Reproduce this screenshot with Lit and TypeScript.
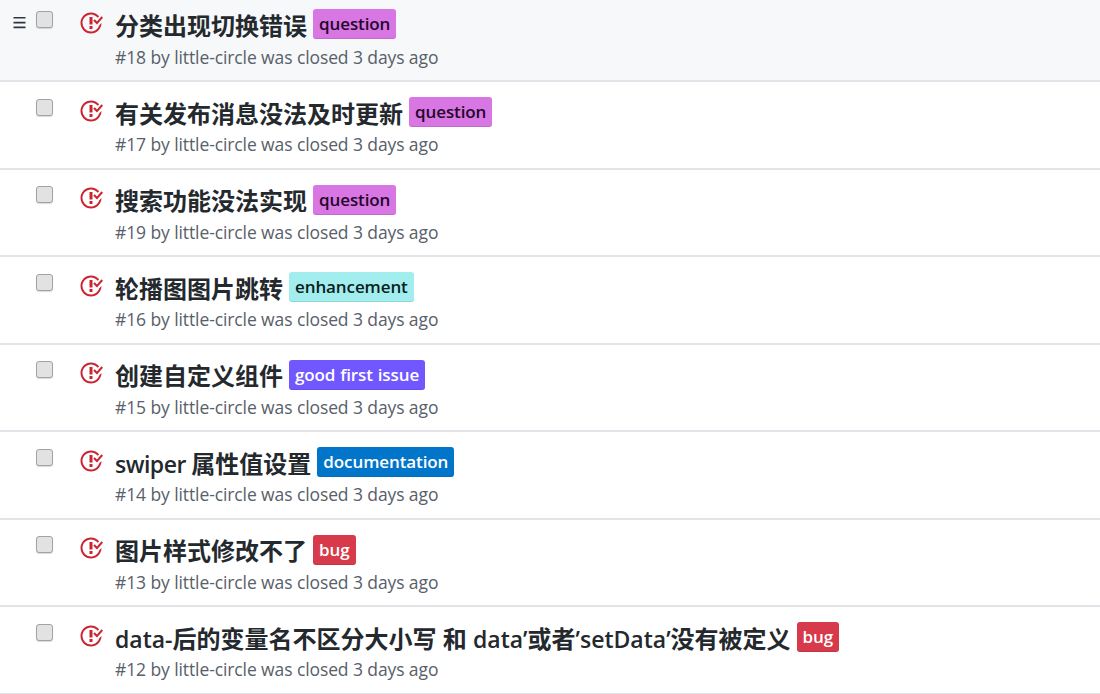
import { LitElement, html, css } from "lit";
import { customElement } from "lit/decorators.js";

type Issue = { title: unknown; num: number; label: string; cls: string };

const issues: Issue[] = [
  { title: html`<b>分类出现切换错误</b>`, num: 18, label: "question", cls: "question" },
  { title: html`<b>有关发布消息没法及时更新</b>`, num: 17, label: "question", cls: "question" },
  { title: html`<b>搜索功能没法实现</b>`, num: 19, label: "question", cls: "question" },
  { title: html`<b>轮播图图片跳转</b>`, num: 16, label: "enhancement", cls: "enhancement" },
  { title: html`<b>创建自定义组件</b>`, num: 15, label: "good first issue", cls: "good" },
  { title: html`<span class="tight">swiper </span><b>属性值设置</b>`, num: 14, label: "documentation", cls: "doc" },
  { title: html`<b>图片样式修改不了</b>`, num: 13, label: "bug", cls: "bug" },
  { title: html`data-<b>后的变量名不区分大小写 和 </b>data’<b>或者</b>’setData’<b>没有被定义</b>`, num: 12, label: "bug", cls: "bug" },
];

@customElement("app-root")
export class AppRoot extends LitElement {
  static styles = css`
    :host {
      display: block;
      width: 1100px;
      height: 694px;
      overflow: hidden;
      background: #fff;
      font-family: "Open Sans", "Noto Sans CJK SC", sans-serif;
      color: #24292e;
    }
    .row {
      display: grid;
      grid-template-columns: 36px 44px 35px 1fr;
      height: 87.5px;
      box-sizing: border-box;
      border-bottom: 2px solid #e1e4e8;
    }
    .row.first {
      height: 82px;
      background: #f6f8fa;
    }
    .cell {
      padding-top: 6px;
    }
    .row.first .cell {
      padding-top: 0;
    }
    .row.first .box,
    .row.first .state svg {
      margin-top: 11px;
    }
    .row.first .meta {
      margin-top: 6px;
    }
    .grip {
      display: flex;
      justify-content: flex-end;
      padding-right: 10px;
    }
    .grip svg {
      display: block;
      margin-top: 16px;
      width: 13px;
      height: 13px;
      fill: #2f363d;
    }
    .box {
      display: block;
      box-sizing: border-box;
      width: 17px;
      height: 17px;
      margin-top: 10.5px;
      border: 1px solid #a3a3a3;
      border-radius: 3px;
      background: #e2e2e2;
      box-shadow: 0 1px 1px rgba(0, 0, 0, 0.15);
    }
    .state svg {
      display: block;
      margin-top: 10.5px;
      margin-left: -1px;
      width: 24px;
      height: 24px;
      fill: #cb2431;
    }
    .title {
      display: flex;
      align-items: center;
      gap: 6px;
      margin-top: 9px;
      height: 30px;
      font-size: 23px;
      line-height: 30px;
      font-weight: 600;
      white-space: nowrap;
    }
    .text {
      padding-top: 3px;
    }
    .tight {
      letter-spacing: -0.5px;
    }
    .title b {
      font-size: 24px;
      font-weight: 700;
    }
    .label {
      box-sizing: border-box;
      height: 30px;
      padding: 0 6px;
      border-radius: 3px;
      font-size: 17px;
      letter-spacing: -0.1px;
      word-spacing: 0.5px;
      line-height: 29px;
      font-weight: 600;
      box-shadow: inset 0 -1px 0 rgba(27, 31, 35, 0.12);
    }
    .question {
      background: #d876e3;
      color: #23062a;
    }
    .enhancement {
      background: #a2eeef;
      color: #0a2020;
    }
    .good {
      background: #7057ff;
      color: #fff;
    }
    .doc {
      background: #0075ca;
      color: #fff;
    }
    .bug {
      background: #d73a4a;
      color: #fff;
    }
    .meta {
      margin-top: 5px;
      font-size: 17.5px;
      letter-spacing: -0.1px;
      line-height: 24px;
      color: #586069;
      white-space: nowrap;
    }
  `;

  render() {
    return issues.map(
      (it, i) => html`
        <div class="row ${i === 0 ? "first" : ""}">
          <div class="cell grip">
            ${i === 0
              ? html`<svg viewBox="0 0 13 13"><path d="M0.5 1h12v1.6H0.5zM0.5 5.8h12v1.6H0.5zM0.5 10.6h12v1.6H0.5z" /></svg>`
              : ""}
          </div>
          <div class="cell"><span class="box"></span></div>
          <div class="cell state">
            <svg viewBox="0 0 16 16">
              <path
                d="M7 10h2v2H7v-2zm2-6H7v5h2V4zm1.5 1.5l-1 1L12 9l4-4.5-1-1L12 7l-1.5-1.5zM8 13.7A5.71 5.71 0 0 1 2.3 8c0-3.14 2.56-5.7 5.7-5.7 1.83 0 3.45.88 4.5 2.2l.92-.92A6.947 6.947 0 0 0 8 1C4.14 1 1 4.14 1 8s3.14 7 7 7 7-3.14 7-7l-1.52 1.52c-.66 2.41-2.86 4.19-5.48 4.19v-.01z"
              />
            </svg>
          </div>
          <div class="cell">
            <div class="title">
              <span class="text">${it.title}</span>
              <span class="label ${it.cls}">${it.label}</span>
            </div>
            <div class="meta">#${it.num} by little-circle was closed 3 days ago</div>
          </div>
        </div>
      `
    );
  }
}
